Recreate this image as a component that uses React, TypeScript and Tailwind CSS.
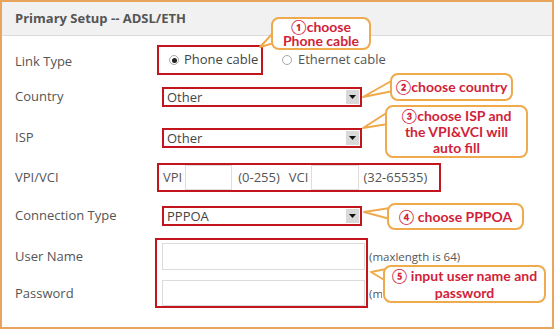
import type React from 'react';

const font = { fontFamily: '"Open Sans", "Liberation Sans", sans-serif' };
const calloutFont = { fontFamily: 'Lato, "DejaVu Sans", sans-serif' };

const Label: React.FC<{ children: React.ReactNode }> = ({ children }) => (
  <div className="w-[142px] shrink-0 text-[13px] text-[#555]">{children}</div>
);

const Radio: React.FC<{ checked?: boolean }> = ({ checked }) => (
  <span className="flex h-[10px] w-[10px] items-center justify-center rounded-full border border-[#a8a8a8] bg-white">
    {checked && <span className="h-[5px] w-[5px] rounded-full bg-[#222]" />}
  </span>
);

const Select: React.FC<{ value: string }> = ({ value }) => (
  <div className="ml-[5px] flex h-[20px] w-[200px] items-center border-2 border-[#c3161c] bg-white">
    <span className="flex-1 pl-[3px] text-[13px] leading-none text-[#444]">{value}</span>
    <span className="mr-[1px] flex h-[14px] w-[13px] items-center justify-center bg-[#d9d9d9]">
      <svg width="7" height="4" viewBox="0 0 7 4">
        <path d="M0 0h7L3.5 4z" fill="#111" />
      </svg>
    </span>
  </div>
);

const Callout: React.FC<{ className: string; children: React.ReactNode }> = ({ className, children }) => (
  <div
    className={`absolute flex flex-col items-center justify-center rounded-[8px] border-2 border-[#eeaa4c] bg-white text-center text-[14px] font-bold text-[#d11f3a] ${className}`}
    style={calloutFont}
  >
    {children}
  </div>
);

export default function App() {
  return (
    <div className="relative h-[329px] w-[554px] border-2 border-[#eaa55c] bg-white" style={font}>
      <div className="flex h-[34px] items-center border-b border-[#dcdcdc] bg-[#f1f1f1] pl-[13px] text-[13px] font-bold text-[#555]">
        Primary Setup -- ADSL/ETH
      </div>

      <div className="flex flex-col pl-[13px]">
        <div className="mt-[9px] flex h-[30px] items-center">
          <div className="pt-[3px]">
            <Label>Link Type</Label>
          </div>
          <div className="flex h-[30px] w-[106px] items-center gap-[5px] border-2 border-[#c3161c] pl-[10px] text-[13px] text-[#444]">
            <Radio checked />
            <span>Phone cable</span>
          </div>
          <div className="ml-[19px] flex items-center gap-[6px] text-[13px] text-[#555]">
            <Radio />
            <span>Ethernet cable</span>
          </div>
        </div>

        <div className="mt-[12px] flex h-[20px] items-center">
          <Label>Country</Label>
          <Select value="Other" />
        </div>

        <div className="mt-[21px] flex h-[20px] items-center">
          <Label>ISP</Label>
          <Select value="Other" />
        </div>

        <div className="mt-[15px] flex h-[29px] items-center">
          <Label>VPI/VCI</Label>
          <div className="flex h-[29px] w-[284px] items-center border-2 border-[#c3161c] pl-[4px] text-[13px] text-[#555]">
            <span>VPI</span>
            <span className="ml-[3px] h-[25px] w-[47px] border border-[#dedede] bg-white" />
            <span className="ml-[6px]">(0-255)</span>
            <span className="ml-[9px]">VCI</span>
            <span className="ml-[3px] h-[25px] w-[48px] border border-[#dedede] bg-white" />
            <span className="ml-[4px]">(32-65535)</span>
          </div>
        </div>

        <div className="mt-[14px] flex h-[20px] items-center">
          <Label>Connection Type</Label>
          <Select value="PPPOA" />
        </div>

        <div className="mt-[12px] flex">
          <div className="flex flex-col pt-[5px]">
            <div className="flex h-[27px] items-center">
              <Label>User Name</Label>
            </div>
            <div className="mt-[10px] flex h-[26px] items-center pt-[2px]">
              <Label>Password</Label>
            </div>
          </div>
          <div className="-ml-[2px] flex h-[70px] w-[213px] flex-col border-2 border-[#c3161c] pl-[5px] pt-[3px]">
            <span className="h-[27px] w-[203px] border border-[#dcdcdc] bg-white" />
            <span className="mt-[10px] h-[26px] w-[203px] border border-[#dcdcdc] bg-white" />
          </div>
          <div className="flex flex-col pl-[1px] pt-[5px] text-[11.5px] text-[#555]">
            <div className="flex h-[27px] items-center">(maxlength is 64)</div>
            <div className="mt-[10px] flex h-[26px] w-[13px] items-center overflow-hidden whitespace-nowrap pt-[2px]">
              (maxlength is 64)
            </div>
          </div>
        </div>
      </div>

      <svg className="pointer-events-none absolute left-[-2px] top-[-2px]" width="554" height="331">
        <g fill="#fff" stroke="#eeaa4c" strokeWidth="2" strokeLinejoin="round">
          <polygon points="274,32 274,43 260,47" />
          <polygon points="393,80 393,91 363,97" />
          <polygon points="388,112 388,124 363,128" />
          <polygon points="390,208 390,219 364,212" />
          <polygon points="386,269 386,281 371,272" />
        </g>
      </svg>

      <Callout className="left-[269px] top-[15px] h-[33px] w-[100px] leading-[14px]">
        <span>①choose</span>
        <span>Phone cable</span>
      </Callout>
      <Callout className="left-[388px] top-[71px] h-[28px] w-[123px] leading-[16px]">
        <span>②choose country</span>
      </Callout>
      <Callout className="left-[383px] top-[103px] h-[53px] w-[143px] leading-[16px]">
        <span>③choose ISP and</span>
        <span>the VPI&amp;VCI will</span>
        <span>auto fill</span>
      </Callout>
      <Callout className="left-[385px] top-[201px] h-[27px] w-[137px] leading-[16px]">
        <span>④ choose PPPOA</span>
      </Callout>
      <Callout className="left-[381px] top-[263px] h-[38px] w-[163px] leading-[17px]">
        <span>⑤ input user name and</span>
        <span>password</span>
      </Callout>
    </div>
  );
}
